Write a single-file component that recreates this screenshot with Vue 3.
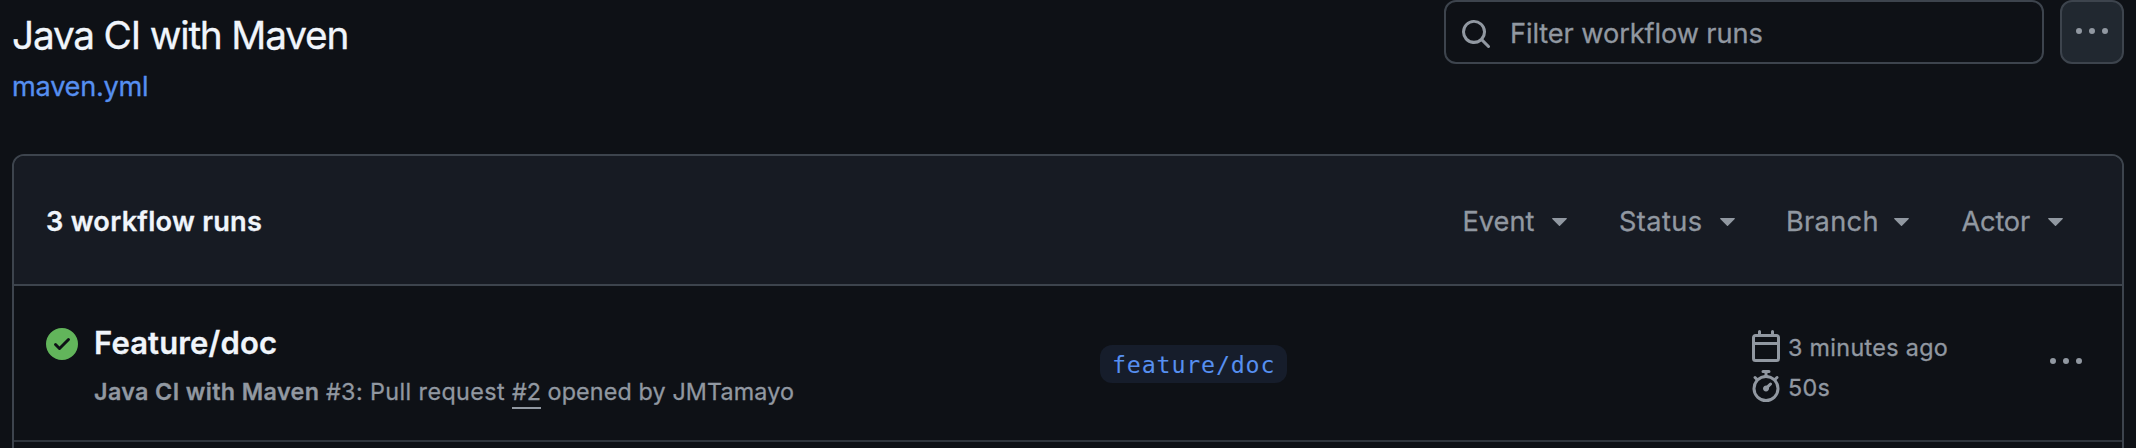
<script setup>
const filters = [
  { label: 'Event', cls: 'event' },
  { label: 'Status', cls: 'status' },
  { label: 'Branch', cls: 'branch' },
  { label: 'Actor', cls: 'actor' },
]
const dots = 'M8 9a1.5 1.5 0 1 0 0-3 1.5 1.5 0 0 0 0 3ZM1.5 9a1.5 1.5 0 1 0 0-3 1.5 1.5 0 0 0 0 3Zm13 0a1.5 1.5 0 1 0 0-3 1.5 1.5 0 0 0 0 3Z'
</script>

<template>
  <main class="page">
    <header class="top">
      <div class="heading">
        <h1>Java CI with Maven</h1>
        <a class="file">maven.yml</a>
      </div>
      <div class="search">
        <svg class="icon" viewBox="0 0 16 16"><path d="M10.68 11.74a6 6 0 0 1-7.922-8.982 6 6 0 0 1 8.982 7.922l3.04 3.04a.749.749 0 1 1-1.06 1.06ZM11.5 7a4.499 4.499 0 1 0-8.997 0A4.499 4.499 0 0 0 11.5 7Z" /></svg>
        <span>Filter workflow runs</span>
      </div>
      <button class="more"><svg class="icon" viewBox="0 0 16 16"><path :d="dots" /></svg></button>
    </header>

    <section class="panel">
      <div class="panel-head">
        <strong>3 workflow runs</strong>
        <nav class="filters">
          <span v-for="f in filters" :key="f.label" class="filter" :class="f.cls">
            <span class="label">{{ f.label }}</span>
            <svg class="caret" viewBox="0 0 15 8"><path d="M.8 0h13.4c.7 0 1 .7.5 1.1L8 7.7a.7.7 0 0 1-1 0L.3 1.1C-.2.7.1 0 .8 0Z" /></svg>
          </span>
        </nav>
      </div>

      <article class="run">
        <svg class="icon check" viewBox="0 0 16 16"><path d="M8 16A8 8 0 1 1 8 0a8 8 0 0 1 0 16Zm3.78-9.72a.751.751 0 0 0-.018-1.042.751.751 0 0 0-1.042-.018L6.75 9.19 5.28 7.72a.751.751 0 0 0-1.042.018.751.751 0 0 0-.018 1.042l2 2a.75.75 0 0 0 1.06 0Z" /></svg>
        <div class="info">
          <h2>Feature/doc</h2>
          <p><b>Java CI with Maven</b> <span class="pull">#3: Pull request </span><a>#2</a> <span class="author">opened by JMTamayo</span></p>
        </div>
        <div class="ref"><code>feature/doc</code></div>
        <div class="meta">
          <div class="meta-line">
            <svg class="icon" viewBox="0 0 16 16"><path d="M4.75 0a.75.75 0 0 1 .75.75V2h5V.75a.75.75 0 0 1 1.5 0V2h1.25c.966 0 1.75.784 1.75 1.75v10.5A1.75 1.75 0 0 1 13.25 16H2.75A1.75 1.75 0 0 1 1 14.25V3.75C1 2.784 1.784 2 2.75 2H4V.75A.75.75 0 0 1 4.75 0ZM2.5 7.5v6.75c0 .138.112.25.25.25h10.5a.25.25 0 0 0 .25-.25V7.5Zm10.75-4H2.75a.25.25 0 0 0-.25.25V6h11V3.75a.25.25 0 0 0-.25-.25Z" /></svg>
            <span>3 minutes ago</span>
          </div>
          <div class="meta-line">
            <svg class="icon" viewBox="0 0 16 16"><path d="M5.75.75A.75.75 0 0 1 6.5 0h3a.75.75 0 0 1 0 1.5h-.75v1l-.001.041a6.724 6.724 0 0 1 3.464 1.435l.007-.006.75-.75a.749.749 0 0 1 1.275.326.749.749 0 0 1-.215.734l-.75.75-.006.007a6.75 6.75 0 1 1-10.548 0L2.72 5.03l-.75-.75a.751.751 0 0 1 .018-1.042.751.751 0 0 1 1.042-.018l.75.75.007.006A6.72 6.72 0 0 1 7.25 2.541V1.5H6.5a.75.75 0 0 1-.75-.75ZM8 14.5a5.25 5.25 0 1 0-.001-10.501A5.25 5.25 0 0 0 8 14.5Zm.389-6.7 1.33-1.33a.75.75 0 1 1 1.061 1.06L9.45 8.861A1.503 1.503 0 0 1 8 10.75a1.499 1.499 0 1 1 .389-2.95Z" /></svg>
            <span>50s</span>
          </div>
        </div>
        <svg class="icon run-more" viewBox="0 0 16 16"><path :d="dots" /></svg>
      </article>
    </section>
  </main>
</template>

<style>
body { margin: 0; background: #0e1116; }
</style>

<style scoped>
* { box-sizing: border-box; }
.page {
  height: 448px;
  padding: 0 12px;
  overflow: hidden;
  background: #0e1116;
  color: #f0f5fb;
  font-family: Inter, "Liberation Sans", sans-serif;
  -webkit-text-stroke: .3px currentColor;
}
.icon { display: block; flex: none; width: 32px; height: 32px; fill: #9198a1; }

.top { display: flex; align-items: flex-start; height: 154px; }
.heading { flex: 1; }
h1 { margin: 0; font-size: 38.8px; font-weight: 400; line-height: 69px; letter-spacing: -1.21px; }
.file { display: block; margin-top: 2px; color: #568ff0; font-size: 27.2px; line-height: 32px; letter-spacing: -.27px; }
.search {
  display: flex;
  align-items: center;
  gap: 18px;
  width: 600px;
  height: 64px;
  margin-right: 16px;
  padding: 0 14px;
  border: 2px solid #3d444d;
  border-radius: 12px;
  color: #9198a1;
  font-size: 27.2px;
  letter-spacing: -.1px;
}
.search .icon { margin-top: 4px; }
.search span { line-height: 32px; margin-top: 4px; }
.more {
  display: flex;
  justify-content: center;
  width: 64px;
  height: 64px;
  padding: 14px 0 0;
  border: 2px solid #3d444d;
  border-radius: 12px;
  background: #212830;
}

.panel {
  height: 320px;
  border: 2px solid #3d444d;
  border-radius: 12px;
  overflow: hidden;
}
.panel-head {
  display: flex;
  justify-content: space-between;
  align-items: center;
  height: 130px;
  padding: 4px 59px 0 32px;
  border-bottom: 2px solid #3d444d;
  background: #171b23;
  font-size: 27.2px;
  line-height: 34px;
}
.panel-head strong { font-weight: 600; letter-spacing: .26px; }
.filters { display: flex; color: #9198a1; }
.filter { display: flex; align-items: center; justify-content: space-between; }
.event { width: 104.5px; margin-right: 52px; }
.status { width: 116px; margin-right: 51px; letter-spacing: .4px; }
.branch { width: 123px; margin-right: 52.5px; letter-spacing: .3px; }
.actor { width: 101.5px; letter-spacing: -.2px; }
.caret { width: 15px; height: 8px; margin-top: 0; fill: #9198a1; }

.run {
  display: grid;
  grid-template-columns: 32px 1006px 650px 320px 32px;
  height: 156px;
  padding-left: 32px;
  border-bottom: 2px solid #2f353d;
}
.check { margin-top: 42px; fill: #62b55b; }
.info { padding: 37px 0 0 16px; }
h2 { margin: 0; font-size: 31px; font-weight: 600; line-height: 40px; letter-spacing: .15px; }
p { margin: 12px 0 0; color: #9198a1; font-size: 23.3px; line-height: 34px; white-space: pre; }
b { font-weight: 600; letter-spacing: .38px; }
.pull { letter-spacing: .42px; }
.author { letter-spacing: .14px; }
p a { padding-bottom: 1px; border-bottom: 2px solid #9198a1; }
.ref { padding: 59px 0 0 16px; }
code {
  display: block;
  width: 187px;
  height: 38px;
  padding: 1px 0 0 12px;
  border-radius: 12px;
  background: #161d2b;
  color: #568ff0;
  font: 23.3px/37px "DejaVu Sans Mono", monospace;
  letter-spacing: .82px;
  -webkit-text-stroke: 0;
}
.meta { display: flex; flex-direction: column; gap: 8px; padding: 44px 0 0 16px; }
.meta-line {
  display: flex;
  gap: 6px;
  height: 32px;
  color: #9198a1;
  font-size: 23.3px;
  line-height: 36px;
  letter-spacing: .34px;
}
.run-more { margin: 60px 0 0 -4px; }
</style>
